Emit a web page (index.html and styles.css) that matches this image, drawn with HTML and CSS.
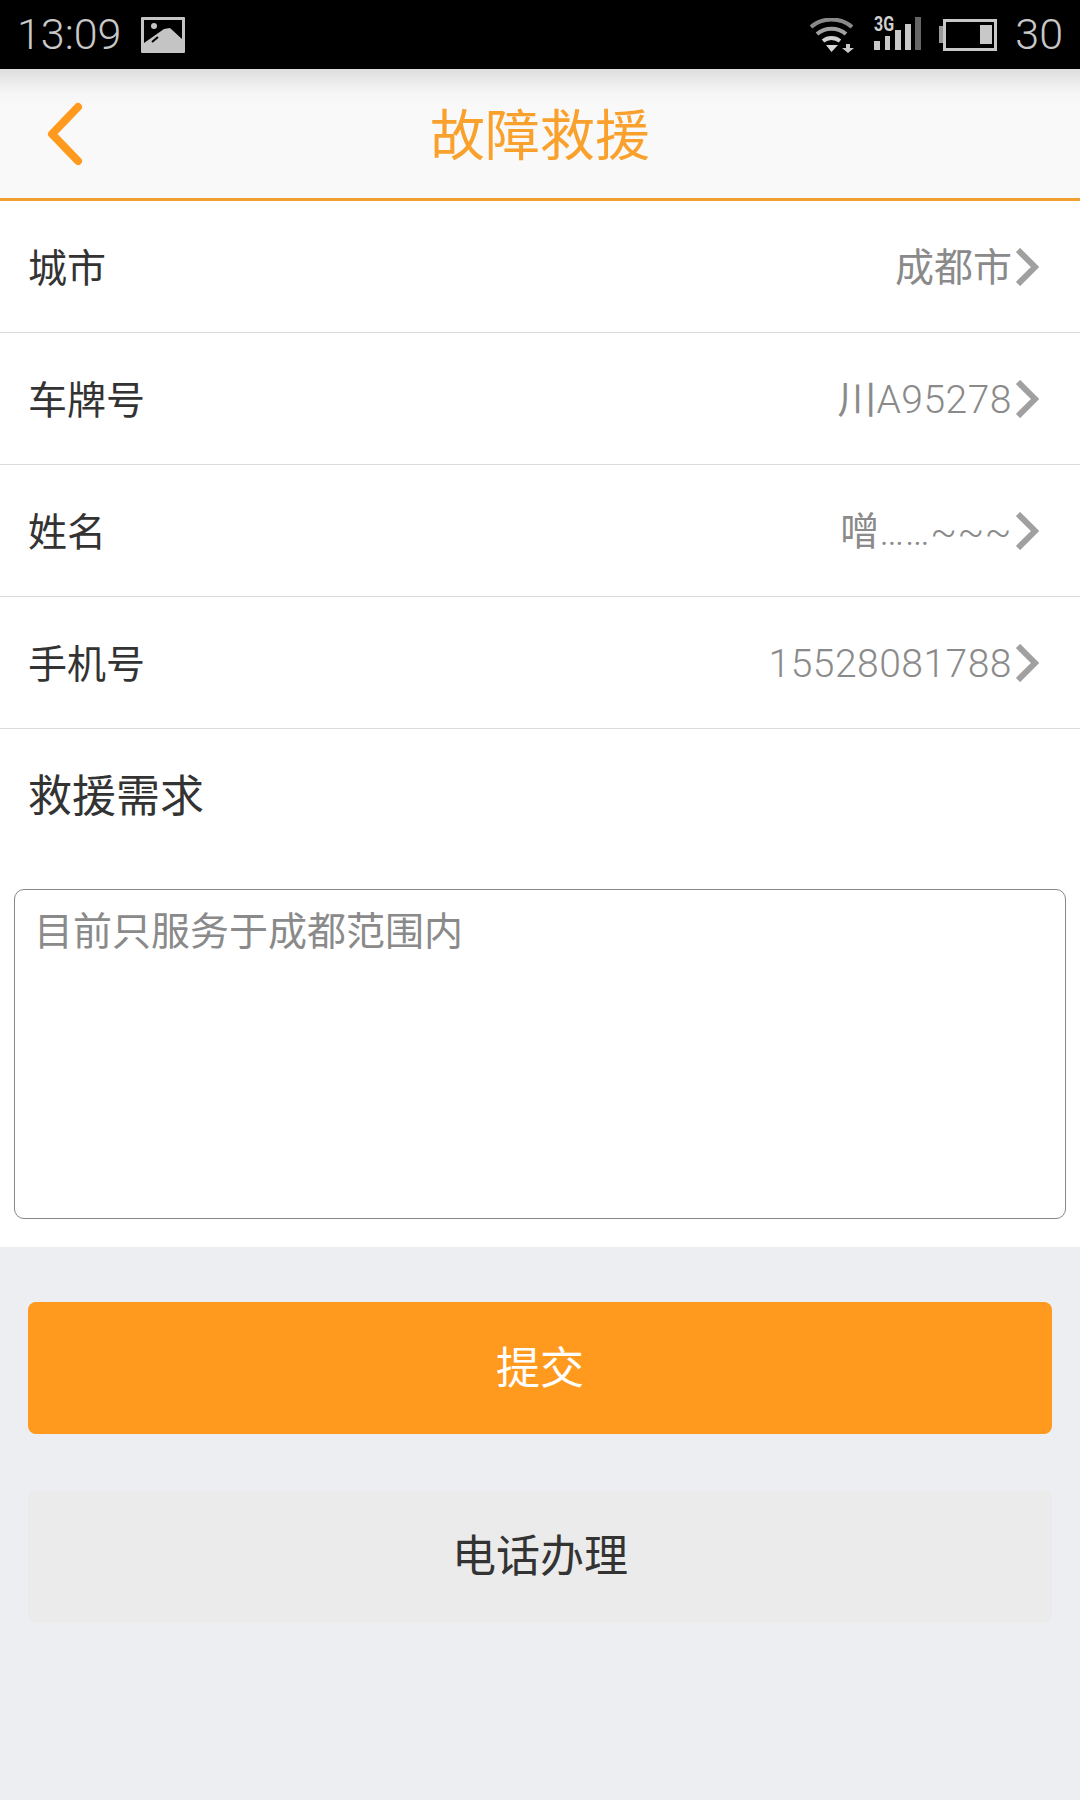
FILE: index.html
```html
<!DOCTYPE html>
<html lang="zh-CN">
<head>
    <meta charset="UTF-8">
    <meta name="viewport" content="width=device-width, initial-scale=1.0">
    <title>故障救援</title>
    <link rel="stylesheet" href="styles.css">
</head>
<body>
    <!-- Statusleiste -->
    <div class="status-bar">
        <div class="status-left">
            <span class="clock">13:09</span>
            <svg class="icon-picture" width="44" height="36" viewBox="0 0 44 36">
                <path fill="#c4c4c4" fill-rule="evenodd" d="M1 0H43a1 1 0 0 1 1 1V35a1 1 0 0 1-1 1H1a1 1 0 0 1-1-1V1a1 1 0 0 1 1-1ZM3 3V26L23 12L29 11L41 22V3Z"/>
                <circle cx="13" cy="9" r="3" fill="#c4c4c4"/>
                <path d="M11 25L17 20" stroke="#000" stroke-width="2" fill="none"/>
            </svg>
        </div>
        <div class="status-right">
            <svg width="44" height="36" viewBox="0 0 44 36" class="icon-wifi">
                <path d="M1 9C12 -1 31 -1 42 9" stroke="#8a8a8a" stroke-width="4" fill="none"/>
                <path d="M7 16C15 9 28 9 36 16" stroke="#a0a0a0" stroke-width="4" fill="none"/>
                <path d="M13 23C18 19 25 19 30 23" stroke="#d0d0d0" stroke-width="4" fill="none"/>
                <path d="M16 27H28L21.500 34Z" fill="#d8d8d8"/>
                <path d="M36 26V30H32L38 35L44 30H40V26Z" fill="#c8c8c8"/>
            </svg>
            <div class="signal">
                <span class="net">3G</span>
                <i class="bar b1"></i><i class="bar b2"></i><i class="bar b3"></i><i class="bar b4"></i><i class="bar b5"></i>
            </div>
            <svg width="58" height="32" viewBox="0 0 58 32" class="icon-battery">
                <rect x="0" y="7" width="4" height="17" fill="#9a9a9a"/>
                <rect x="5.500" y="1.500" width="51" height="29" stroke="#c8c8c8" stroke-width="3" fill="none"/>
                <rect x="41" y="6" width="12" height="19" fill="#c8c8c8"/>
            </svg>
            <span class="battery-num">30</span>
        </div>
    </div>

    <header class="nav">
        <svg class="nav-back" width="38" height="64" viewBox="0 0 38 64">
            <path d="M32 5L6 32L32 59" stroke="#ff9a1f" stroke-width="8" stroke-linecap="round" stroke-linejoin="round" fill="none"/>
        </svg>
        <h1 class="nav-title">故障救援</h1>
    </header>

    <main class="form">
        <div class="row">
            <span class="row-label">城市</span>
            <span class="row-value">成都市</span>
            <svg class="chevron" width="24" height="38" viewBox="0 0 24 38"><path d="M3 2L20 19L3 36" stroke="#a0a0a0" stroke-width="6" fill="none"/></svg>
        </div>
        <div class="row">
            <span class="row-label">车牌号</span>
            <span class="row-value">川<span class="latin">A95278</span></span>
            <svg class="chevron" width="24" height="38" viewBox="0 0 24 38"><path d="M3 2L20 19L3 36" stroke="#a0a0a0" stroke-width="6" fill="none"/></svg>
        </div>
        <div class="row">
            <span class="row-label">姓名</span>
            <span class="row-value">噌<span class="latin">……~~~</span></span>
            <svg class="chevron" width="24" height="38" viewBox="0 0 24 38"><path d="M3 2L20 19L3 36" stroke="#a0a0a0" stroke-width="6" fill="none"/></svg>
        </div>
        <div class="row">
            <span class="row-label">手机号</span>
            <span class="row-value"><span class="latin">15528081788</span></span>
            <svg class="chevron" width="24" height="38" viewBox="0 0 24 38"><path d="M3 2L20 19L3 36" stroke="#a0a0a0" stroke-width="6" fill="none"/></svg>
        </div>

        <div class="need">
            <div class="need-title">救援需求</div>
            <div class="need-box">目前只服务于成都范围内</div>
        </div>
    </main>

    <section class="actions">
        <button class="btn btn-primary">提交</button>
        <button class="btn btn-plain">电话办理</button>
    </section>
</body>
</html>
```

FILE: styles.css
```css
* {
    box-sizing: border-box;
}

body {
    margin: 0;
    height: 1800px;
    overflow: hidden;
    background-color: #eceef2;
    color: #333;
    font-family: Roboto, "Noto Sans CJK SC", sans-serif;
}

/* Statusleiste */
.status-bar {
    display: flex;
    justify-content: space-between;
    align-items: center;
    height: 69px;
    padding: 0 17px;
    background-color: #000;
    color: #c8c8c8;
}

.status-left,
.status-right {
    display: flex;
    align-items: center;
}

.clock,
.battery-num {
    font-size: 43px;
    font-weight: 300;
    line-height: 1;
}

.icon-picture {
    margin-left: 20px;
}

.icon-wifi {
    margin-top: 2px;
}

.signal {
    position: relative;
    display: flex;
    align-items: flex-end;
    gap: 4.500px;
    width: 47px;
    height: 36px;
    margin-left: 20px;
    margin-bottom: 5px;
}

.net {
    position: absolute;
    top: 0;
    left: 0;
    font-size: 20px;
    font-weight: 700;
    line-height: 1;
    color: #d0d0d0;
    transform: scaleX(0.8);
    transform-origin: left;
}

.bar {
    display: block;
    width: 6px;
    background-color: #c8c8c8;
}

.b1 { height: 9px; }
.b2 { height: 14px; }
.b3 { height: 20px; }
.b4 { height: 26px; }
.b5 { height: 33px; background-color: #666; }

.icon-battery {
    margin-left: 18px;
}

.battery-num {
    margin-left: 18px;
}

/* Kopfzeile */
.nav {
    position: relative;
    display: flex;
    justify-content: center;
    align-items: center;
    height: 132px;
    padding-bottom: 6px;
    background: linear-gradient(#dedede, #f6f6f6 24px, #f9f9f9 40px);
    border-bottom: 3px solid #f0a030;
}

.nav-back {
    position: absolute;
    top: 33px;
    left: 46px;
}

.nav-title {
    margin: 0;
    font-size: 55px;
    font-weight: 400;
    color: #f9a12c;
}

/* Formular */
.form {
    background-color: #fff;
}

.row {
    display: flex;
    align-items: center;
    height: 132px;
    padding: 0 41px 0 28px;
    border-bottom: 1px solid #dcdcdc;
}

.row-label {
    flex: 1;
    padding-bottom: 4px;
    font-size: 39px;
}

.row-value {
    padding-top: 2px;
    font-size: 39px;
    line-height: 50px;
    color: #8a8a8a;
}

.latin {
    font-weight: 300;
    letter-spacing: 0.5px;
}

.chevron {
    margin-left: 3px;
}

.need {
    height: 518px;
    padding-top: 37px;
}

.need-title {
    padding-left: 28px;
    font-size: 44px;
    line-height: 62px;
}

.need-box {
    height: 330px;
    margin: 61px 14px 0;
    padding: 17px 19px;
    border: 1px solid #888;
    border-radius: 10px;
    font-size: 39px;
    line-height: 50px;
    color: #8a8a8a;
}

/* Schaltflächen */
.actions {
    display: flex;
    flex-direction: column;
    gap: 57px;
    padding: 55px 28px 0;
}

.btn {
    height: 132px;
    padding-bottom: 8px;
    border: none;
    border-radius: 8px;
    font-family: inherit;
    font-size: 44px;
}

.btn-primary {
    background-color: #ff9a1f;
    color: #fff;
}

.btn-plain {
    padding-bottom: 10px;
    background-color: #ebebeb;
    color: #333;
}
```
